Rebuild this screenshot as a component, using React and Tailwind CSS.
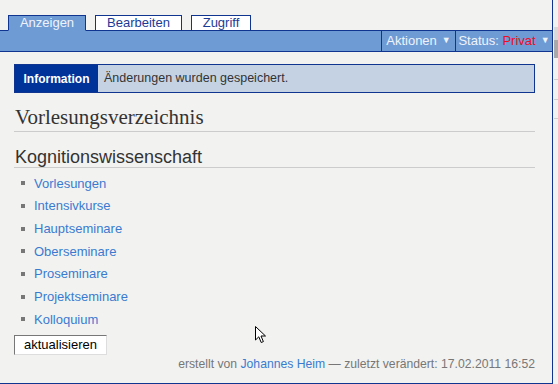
import React from 'react';

const LINKS = ['Vorlesungen', 'Intensivkurse', 'Hauptseminare', 'Oberseminare', 'Proseminare', 'Projektseminare', 'Kolloquium'];

const Caret = () => <span className="ml-[5px] text-[9px] align-middle">▼</span>;

const Cursor = () => (
    <svg className="absolute left-[255px] top-[326px]" width="12" height="18" viewBox="0 0 12 18">
        <path d="M0.5 0.5 L0.5 14 L3.8 10.8 L6.2 16.5 L8.4 15.6 L6 10 L10.5 10 Z" fill="#fff" stroke="#000" strokeWidth="1" strokeLinejoin="round" />
    </svg>
);

export default function App() {
    return (
        <div className="relative w-[558px] h-[384px] overflow-hidden bg-[#f2f2f1] flex font-['Liberation_Sans',Arial,sans-serif]">
            {/* main column */}
            <div className="w-[553px] h-[384px] shrink-0 border-r border-b border-[#0f3591] pt-[15px] flex flex-col">
                {/* tabs */}
                <div className="flex items-end gap-[9px] pl-[8px] relative z-10 -mb-px">
                    <div className="w-[78px] h-[16px] bg-[#6e9bd4] border border-[#0f3591] border-b-[#6e9bd4] text-[13px] leading-[14px] text-[#eef3fb] text-center">Anzeigen</div>
                    <div className="w-[87px] h-[16px] bg-white border border-[#0f3591] text-[13px] leading-[14px] text-[#1b3c96] text-center">Bearbeiten</div>
                    <div className="w-[60px] h-[16px] bg-white border border-[#0f3591] text-[13px] leading-[14px] text-[#1b3c96] text-center">Zugriff</div>
                </div>
                {/* action bar */}
                <div className="h-[22px] bg-[#6e9bd4] border-t border-b border-[#0f3591] flex justify-end text-[13px] text-[#eef3fb]">
                    <div className="w-[74px] border-l border-[#0f3591] flex items-center justify-center">Aktionen<Caret /></div>
                    <div className="w-[97px] border-l border-[#0f3591] flex items-center justify-center">
                        Status:&nbsp;<span className="text-[#e8101e]">Privat</span><Caret />
                    </div>
                </div>

                {/* content */}
                <div className="pl-[14px] pr-[17px] pt-[12px] flex flex-col">
                    <div className="h-[29px] flex border border-[#0f3591] bg-[#c5d2e3]">
                        <div className="w-[83px] bg-[#00339a] text-white text-[12px] font-bold flex items-center justify-center">Information</div>
                        <div className="pl-[6px] flex items-center text-[12.5px] text-[#333]">Änderungen wurden gespeichert.</div>
                    </div>

                    <h1 className="mt-[12px] pb-[2px] pl-px border-b border-[#cccccc] font-['Liberation_Serif',serif] text-[21px] leading-[24px] text-[#333]">Vorlesungsverzeichnis</h1>
                    <h2 className="mt-[15px] pl-px border-b border-[#cccccc] text-[18px] leading-[20px] text-[#333]">Kognitionswissenschaft</h2>

                    <ul className="mt-[4px]">
                        {LINKS.map(l => (
                            <li key={l} className="h-[22.7px] flex items-center">
                                <span className="ml-[7px] w-[4px] h-[4px] bg-[#777] mr-[9px]" />
                                <span className="text-[13px] text-[#3a7bd0]">{l}</span>
                            </li>
                        ))}
                    </ul>

                    <div className="mt-px">
                        <button className="w-[93px] h-[20px] bg-white border border-t-[#777] border-l-[#777] border-r-[#ddd] border-b-[#ddd] text-[13px] leading-[16px] text-black">aktualisieren</button>
                    </div>

                    <div className="text-right text-[12.2px] leading-[16px] text-[#777]">
                        erstellt von <span className="text-[#3a7bd0]">Johannes Heim</span> — zuletzt verändert: 17.02.2011 16:52
                    </div>
                </div>
            </div>

            {/* scrollbar stub */}
            <div className="ml-px mt-[27px] w-[4px] flex flex-col">
                <div className="h-[13px] bg-[#d9d9d9]" />
                <div className="h-[18px] bg-[#a9a9a9]" />
                <div className="h-[22px] border-b border-[#cfcfcf]" />
                <div className="h-[20px] border-b border-[#cfcfcf]" />
                <div className="h-[19px] border-b border-[#cfcfcf]" />
            </div>

            <Cursor />
        </div>
    );
}
